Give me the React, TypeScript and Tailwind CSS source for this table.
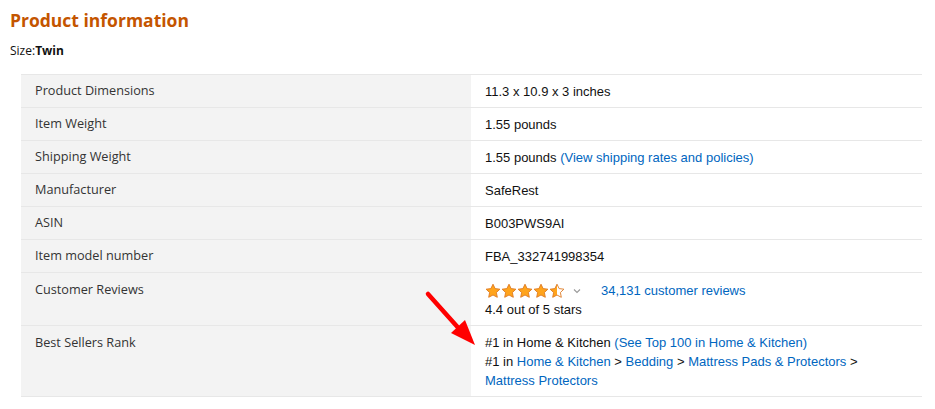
import React from "react";

const label = "font-['Open_Sans',sans-serif] text-[12.7px] text-[#333]";
const value = "font-['Liberation_Sans',Arial,sans-serif] text-[13px] text-[#111] leading-[19px]";
const link = "text-[#0066c0]";

function Star({fill}: {fill: "full" | "half"}) {
    const d = "M8 1.2l2.1 4.4 4.8.6-3.5 3.3.9 4.8L8 12l-4.3 2.3.9-4.8L1.1 6.2l4.8-.6z";
    return (
        <svg width="16" height="16" viewBox="0 0 16 16">
            <defs>
                <linearGradient id="half">
                    <stop offset="50%" stopColor="#ffa41c"/>
                    <stop offset="50%" stopColor="#fff"/>
                </linearGradient>
            </defs>
            <path d={d} fill={fill === "full" ? "#ffa41c" : "url(#half)"} stroke="#de7921" strokeWidth="0.9"
                  strokeLinejoin="round"/>
        </svg>
    )
}

function Row({name, children}: {name: string, children: React.ReactNode}) {
    return (
        <div className="flex h-[33px] border-b border-[#e7e7e7]">
            <div className={`w-[450px] shrink-0 bg-[#f3f3f3] pl-[14px] flex items-center ${label}`}>
                {name}
            </div>
            <div className={`flex-1 pl-[14px] flex items-center ${value}`}>{children}</div>
        </div>
    )
}

export default function App() {
    return (
        <div className="relative w-[935px] h-[409px] bg-white">
            <h2 className="pl-[10px] pt-[7px] font-['Open_Sans',sans-serif] font-bold text-[17.5px] leading-[26px] text-[#c45500]">
                Product information
            </h2>
            <div className="pl-[10px] pt-[9px] font-['Open_Sans',sans-serif] text-[12px] text-[#111] leading-[17px]">
                Size:<span className="font-bold">Twin</span>
            </div>

            <div className="ml-[21px] mt-[15px] w-[901px] border-t border-[#e7e7e7]">
                <Row name="Product Dimensions">11.3 x 10.9 x 3 inches</Row>
                <Row name="Item Weight">1.55 pounds</Row>
                <Row name="Shipping Weight">
                    1.55 pounds&nbsp;<span className={link}>(View shipping rates and policies)</span>
                </Row>
                <Row name="Manufacturer">SafeRest</Row>
                <Row name="ASIN">B003PWS9AI</Row>
                <Row name="Item model number">FBA_332741998354</Row>
                <div className="h-[53px] flex border-b border-[#e7e7e7]">
                    <div className={`w-[450px] shrink-0 bg-[#f3f3f3] pl-[14px] pt-[7px] ${label}`}>Customer Reviews</div>
                    <div className={`flex-1 pl-[14px] pt-[8px] ${value}`}>
                        <div className="flex items-center h-[19px]">
                            <div className="flex">
                                <Star fill="full"/><Star fill="full"/><Star fill="full"/><Star fill="full"/><Star fill="half"/>
                            </div>
                            <svg className="ml-[8px]" width="8" height="6" viewBox="0 0 8 6">
                                <path d="M1 1.5l3 3 3-3" fill="none" stroke="#999" strokeWidth="1.1"/>
                            </svg>
                            <span className={`ml-[20px] ${link}`}>34,131 customer reviews</span>
                        </div>
                        <div>4.4 out of 5 stars</div>
                    </div>
                </div>
                <div className="h-[71px] flex border-b border-[#e7e7e7]">
                    <div className={`w-[450px] shrink-0 bg-[#f3f3f3] pl-[14px] pt-[7px] ${label}`}>Best Sellers Rank</div>
                    <div className={`flex-1 pl-[14px] pt-[7px] pr-[10px] ${value}`}>
                        <div>#1 in Home &amp; Kitchen <span className={link}>(See Top 100 in Home &amp; Kitchen)</span></div>
                        <div>
                            #1 in <span className={link}>Home &amp; Kitchen</span> &gt; <span className={link}>Bedding</span> &gt;{" "}
                            <span className={link}>Mattress Pads &amp; Protectors</span> &gt;{" "}
                            <span className={`whitespace-nowrap ${link}`}>Mattress Protectors</span>
                        </div>
                    </div>
                </div>
            </div>

            {/* red annotation arrow */}
            <svg className="absolute left-0 top-0 pointer-events-none" width="935" height="409">
                <line x1="428" y1="294" x2="462" y2="332" stroke="#ff0000" strokeWidth="4.5" strokeLinecap="round"/>
                <polygon points="475,345 451,333 465,320" fill="#ff0000"/>
            </svg>
        </div>
    )
}
